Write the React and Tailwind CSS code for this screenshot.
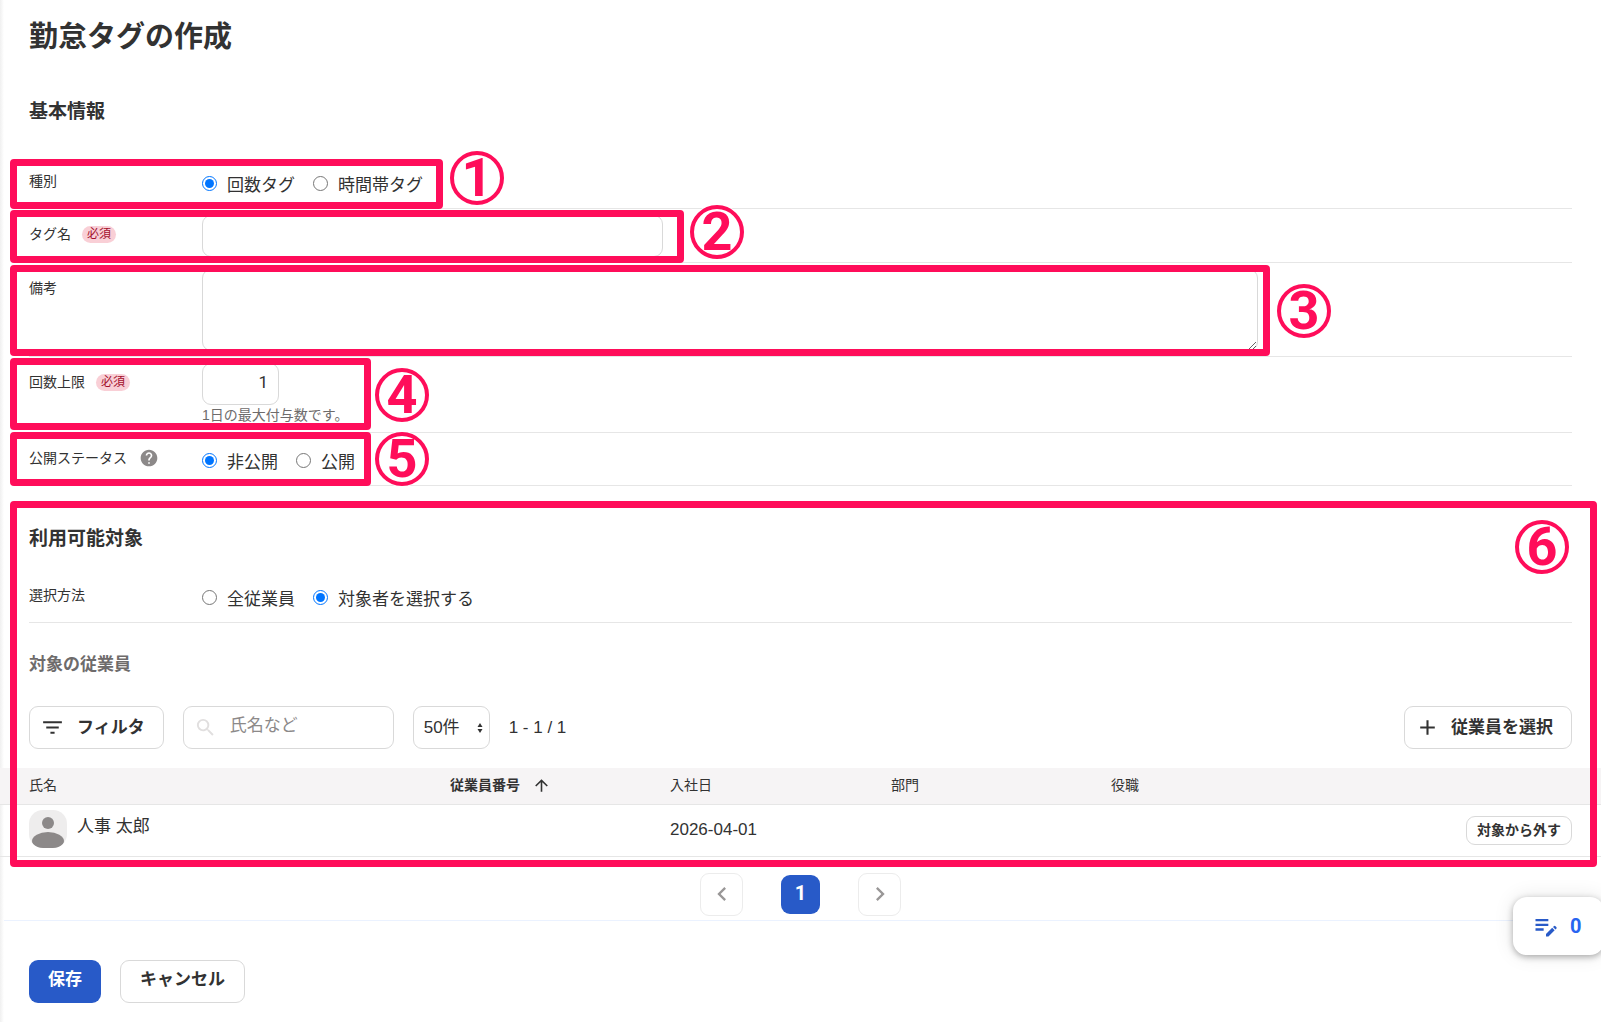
import React, { useState } from 'react'
import {
  MdAdd,
  MdArrowUpward,
  MdChevronLeft,
  MdChevronRight,
  MdEditNote,
  MdFilterList,
  MdHelp,
  MdSearch,
} from 'react-icons/md'

const RequiredBadge = () => (
  <span className="ml-[11px] inline-block h-[17px] rounded-full bg-[#f9cfd6] px-[5px] text-[12px] leading-[17px] text-[#a30f2d]">
    必須
  </span>
)

const RadioGroup = ({ name, label, options, value, onChange }) => (
  <div className="flex gap-[18px] pt-[16px]" role="radiogroup" aria-label={label}>
    {options.map((option) => (
      <label key={option} className="flex items-start gap-[10px] text-[17px] leading-[28px]">
        <input
          type="radio"
          name={name}
          checked={value === option}
          onChange={() => onChange(option)}
          className="mt-1 h-[15px] w-[15px] accent-[#0075ff]"
        />
        {option}
      </label>
    ))}
  </div>
)

const FormRow = ({ label, htmlFor, badge, children, mark }) => (
  <div className="relative flex min-h-[53px] items-start border-b border-[#e6e6e6] pb-[5px]">
    <div className="flex w-[173px] shrink-0 items-center pt-[15px] text-[14px] leading-[20px]">
      {htmlFor ? <label htmlFor={htmlFor}>{label}</label> : <span>{label}</span>}
      {badge}
    </div>
    <div className="min-w-0 flex-1">{children}</div>
    {mark}
  </div>
)

// Pink frame around a part of the form
const Frame = ({ className }) => (
  <div className={`pointer-events-none absolute rounded-[4px] border-[7px] border-[#ff0d5a] ${className}`} />
)

// Numbered circle next to a frame
const Marker = ({ number, className }) => (
  <span
    className={`pointer-events-none absolute flex h-[54px] w-[54px] items-center justify-center rounded-full border-4 border-[#ff0d5a] font-['Roboto','Liberation_Sans',sans-serif] text-[54px] leading-none font-bold text-[#ff0d5a] ring-1 ring-white ${className}`}
  >
    {number}
  </span>
)

const outlineButton = 'flex items-center rounded-[9px] border border-[#d9d9d9] bg-white font-bold'

const employees = [{ name: '人事 太郎', number: '', joined: '2026-04-01', department: '', position: '' }]

const App = () => {
  const [type, setType] = useState('回数タグ')
  const [status, setStatus] = useState('非公開')
  const [method, setMethod] = useState('対象者を選択する')
  const [limit, setLimit] = useState('1')

  return (
    <main className="relative min-h-screen overflow-x-hidden bg-white font-['Liberation_Sans','Noto_Sans_CJK_JP',sans-serif] text-[#323232]">
      <div className="pointer-events-none absolute inset-y-0 left-0 w-[4px] bg-linear-to-r from-[#f0f0f0] to-white" />

      <div className="px-[29px]">
        <h1 className="pt-[15px] text-[29px] leading-[44px] font-bold">勤怠タグの作成</h1>
        <h2 className="mt-[39px] mb-[30px] text-[19px] leading-[28px] font-bold">基本情報</h2>

        <FormRow
          label="種別"
          mark={
            <>
              <Frame className="top-[3px] -bottom-px left-[-19px] w-[433px]" />
              <Marker number="1" className="top-[-5px] left-[421px]" />
            </>
          }
        >
          <RadioGroup name="type" label="種別" options={['回数タグ', '時間帯タグ']} value={type} onChange={setType} />
        </FormRow>

        <FormRow
          label="タグ名"
          htmlFor="tag-name"
          badge={<RequiredBadge />}
          mark={
            <>
              <Frame className="top-px -bottom-px left-[-19px] w-[674px]" />
              <Marker number="2" className="top-[-4px] left-[661px]" />
            </>
          }
        >
          <input
            id="tag-name"
            type="text"
            className="mt-[6px] block h-[42px] w-[461px] rounded-[9px] border border-[#d9d9d9] px-3 text-[17px]"
          />
        </FormRow>

        <FormRow
          label="備考"
          htmlFor="note"
          mark={
            <>
              <Frame className="top-[2px] bottom-0 left-[-19px] w-[1260px]" />
              <Marker number="3" className="top-[21px] left-[1248px]" />
            </>
          }
        >
          <textarea
            id="note"
            className="mt-[6px] block h-[82px] w-[1056px] rounded-[9px] border border-[#d9d9d9] px-3 py-2 text-[17px]"
          />
        </FormRow>

        <FormRow
          label="回数上限"
          htmlFor="limit"
          badge={<RequiredBadge />}
          mark={
            <>
              <Frame className="top-px bottom-[2px] left-[-19px] w-[361px]" />
              <Marker number="4" className="top-[11px] left-[346px]" />
            </>
          }
        >
          <input
            id="limit"
            type="text"
            inputMode="numeric"
            value={limit}
            onChange={(e) => setLimit(e.target.value)}
            className="mt-[6px] block h-[42px] w-[77px] rounded-[9px] border border-[#d9d9d9] px-[10px] pb-1 text-right font-['Roboto','Noto_Sans_CJK_JP',sans-serif] text-[17px]"
          />
          <p className="mb-[2px] text-[14px] leading-[20px] text-[#6e6b6b]">1日の最大付与数です。</p>
        </FormRow>

        <FormRow
          label="公開ステータス"
          badge={<MdHelp size={20} className="ml-[12px] text-[#8c8989]" />}
          mark={
            <>
              <Frame className="-top-px -bottom-px left-[-19px] w-[361px]" />
              <Marker number="5" className="-top-px left-[346px]" />
            </>
          }
        >
          <RadioGroup name="status" label="公開ステータス" options={['非公開', '公開']} value={status} onChange={setStatus} />
        </FormRow>
      </div>

      <section className="relative">
        <div className="px-[29px] pt-[39px]">
          <h2 className="mb-[17px] text-[19px] leading-[28px] font-bold">利用可能対象</h2>
          <FormRow label="選択方法">
            <RadioGroup
              name="method"
              label="選択方法"
              options={['全従業員', '対象者を選択する']}
              value={method}
              onChange={setMethod}
            />
          </FormRow>
          <h3 className="mt-[30px] mb-[29px] text-[17px] leading-[24px] font-bold text-[#6e6b6b]">対象の従業員</h3>

          <div className="mb-[19px] flex items-center text-[17px]">
            <button type="button" className={`${outlineButton} h-[43px] gap-[12px] pr-[18px] pl-[10px]`}>
              <MdFilterList size={25} />
              フィルタ
            </button>
            <div className="relative ml-[19px]">
              <MdSearch size={23} className="absolute top-[10px] left-[11px] text-[#e1dfdf]" />
              <input
                type="search"
                aria-label="氏名など"
                placeholder="氏名など"
                className="block h-[43px] w-[211px] rounded-[9px] border border-[#d9d9d9] pr-3 pb-1 pl-[46px] placeholder:text-[#8c8989]"
              />
            </div>
            <div className="relative ml-[19px]">
              <select
                aria-label="表示件数"
                defaultValue="50"
                className="block h-[43px] w-[77px] appearance-none rounded-[9px] border border-[#d9d9d9] bg-white pl-[10px]"
              >
                <option value="50">50件</option>
                <option value="100">100件</option>
              </select>
              <svg viewBox="0 0 6 10" className="pointer-events-none absolute top-[17px] right-[7px] h-[10px] w-[6px]">
                <path d="M3 0L5.500 4H.5zM3 10L.5 6h5z" fill="#323232" />
              </svg>
            </div>
            <span className="ml-[19px]">1 - 1 / 1</span>
            <button type="button" className={`${outlineButton} ml-auto h-[43px] gap-[11px] pr-[18px] pl-[10px]`}>
              <MdAdd size={25} />
              従業員を選択
            </button>
          </div>
        </div>

        <table className="w-full table-fixed border-collapse text-left">
          <colgroup>
            <col className="w-[450px]" />
            <col className="w-[220px]" />
            <col className="w-[221px]" />
            <col className="w-[220px]" />
            <col className="w-[220px]" />
            <col />
          </colgroup>
          <thead>
            <tr className="h-[36px] border-b border-[#e6e6e6] bg-[#f6f4f5] text-[14px]">
              <th className="pl-[29px] font-normal">氏名</th>
              <th aria-sort="ascending">
                <span className="flex items-center gap-[12px]">
                  従業員番号
                  <MdArrowUpward size={19} />
                </span>
              </th>
              <th className="font-normal">入社日</th>
              <th className="font-normal">部門</th>
              <th className="font-normal">役職</th>
              <th />
            </tr>
          </thead>
          <tbody>
            {employees.map((employee) => (
              <tr key={employee.name} className="h-[52px] border-b border-[#e6e6e6] text-[17px]">
                <td className="pl-[29px]">
                  <div className="flex items-center gap-[10px] pb-[2px]">
                    <svg viewBox="0 0 38 38" className="h-[38px] w-[38px] rounded-[14px] bg-[#eeeded]">
                      <circle cx="19" cy="13" r="6" fill="#8c8989" />
                      <ellipse cx="19" cy="31" rx="16" ry="9" fill="#8c8989" />
                    </svg>
                    <span className="pb-1">{employee.name}</span>
                  </div>
                </td>
                <td>{employee.number}</td>
                <td>{employee.joined}</td>
                <td>{employee.department}</td>
                <td>{employee.position}</td>
                <td className="pr-[29px]">
                  <button type="button" className={`${outlineButton} ml-auto h-[29px] px-[10px] text-[14px]`}>
                    対象から外す
                  </button>
                </td>
              </tr>
            ))}
          </tbody>
        </table>

        <Frame className="top-[15px] right-[4px] bottom-[-10px] left-[10px]" />
        <Marker number="6" className="top-[34px] right-[32px]" />
      </section>

      <nav
        aria-label="ページ"
        className="flex items-center justify-center gap-[38px] border-b border-[#ebf2ff] pt-[16px] pb-[4px]"
      >
        <button
          type="button"
          disabled
          aria-label="前へ"
          className="flex h-[43px] w-[43px] items-center justify-center rounded-[9px] border border-[#ececec] text-[#999797]"
        >
          <MdChevronLeft size={28} />
        </button>
        <button
          type="button"
          aria-current="page"
          className="h-[39px] w-[39px] rounded-[9px] bg-[#285ac8] pb-[2px] font-['Roboto','Noto_Sans_CJK_JP',sans-serif] text-[20px] font-bold text-white"
        >
          1
        </button>
        <button
          type="button"
          disabled
          aria-label="次へ"
          className="flex h-[43px] w-[43px] items-center justify-center rounded-[9px] border border-[#ececec] text-[#999797]"
        >
          <MdChevronRight size={28} />
        </button>
      </nav>

      <div className="flex gap-[19px] px-[29px] pt-[39px] pb-[19px] text-[17px]">
        <button type="button" className="h-[43px] rounded-[9px] bg-[#285ac8] px-[19px] pb-[2px] font-bold text-white">
          保存
        </button>
        <button type="button" className={`${outlineButton} h-[43px] px-[19px] pb-[2px]`}>
          キャンセル
        </button>
      </div>

      <button
        type="button"
        aria-label="メモ"
        className="absolute right-[-3px] bottom-[67px] flex h-[58px] w-[91px] items-center gap-[10px] rounded-[14px] bg-white pl-[19px] font-['Roboto','Noto_Sans_CJK_JP',sans-serif] text-[20px] font-bold text-[#2864f0] shadow-[0_2px_6px_rgba(0,0,0,0.3),0_0_20px_rgba(0,0,0,0.1)]"
      >
        <MdEditNote size={28} className="text-[#285ac8]" />
        0
      </button>
    </main>
  )
}

export default App
